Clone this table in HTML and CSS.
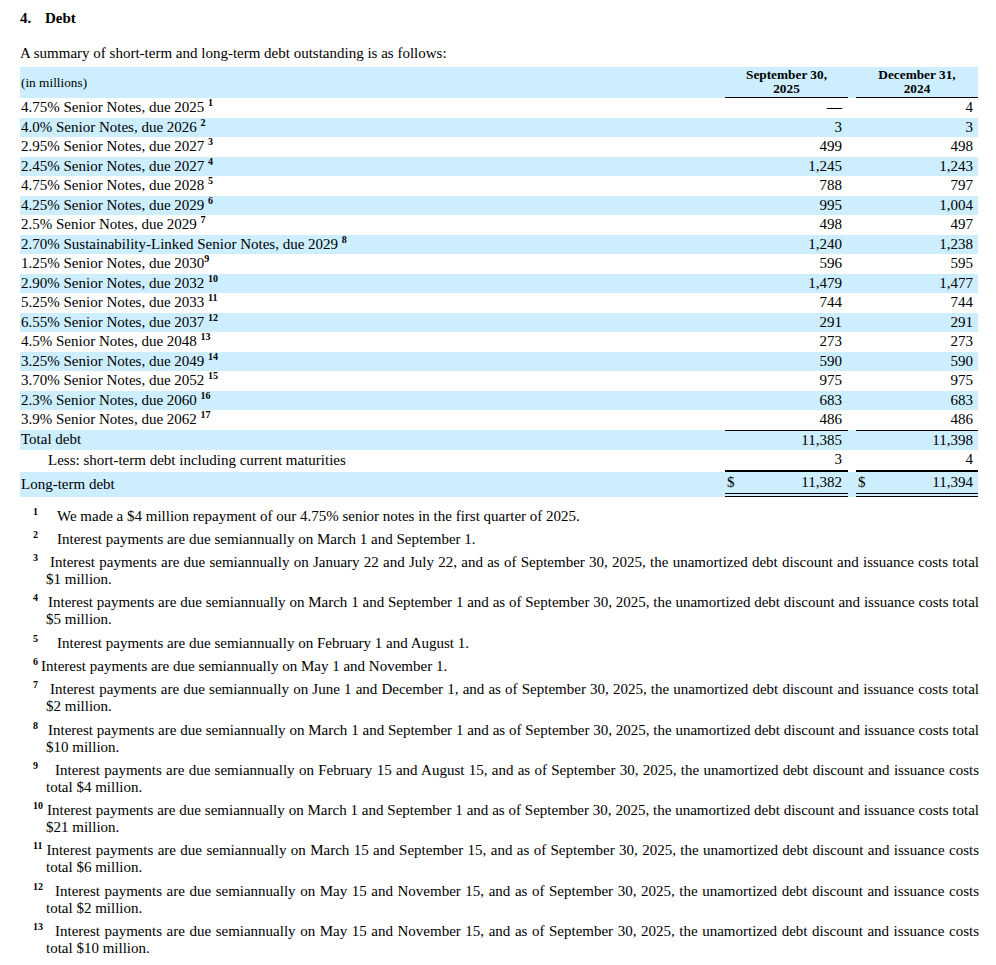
FILE: index.html
```html
<!DOCTYPE html>
<html lang="en">
<head>
<meta charset="utf-8">
<title>Debt</title>
<link rel="stylesheet" href="styles.css">
</head>
<body>
<div class="page">
  <h2 class="heading"><span class="heading-num">4.</span><span>Debt</span></h2>
  <p class="intro">A summary of short-term and long-term debt outstanding is as follows:</p>

  <table class="debt">
    <colgroup>
      <col class="c-label">
      <col class="c-num">
      <col class="c-gap">
      <col class="c-num2">
    </colgroup>
    <thead>
      <tr class="alt">
        <th class="units">(in millions)</th>
        <th class="col-head">September 30,<br>2025</th>
        <th class="gap"></th>
        <th class="col-head">December 31,<br>2024</th>
      </tr>
    </thead>
    <tbody>
      <tr><td class="label">4.75% Senior Notes, due 2025 <sup class="tsup">1</sup></td><td class="num"><span class="nil">—</span></td><td class="gap"></td><td class="num">4</td></tr>
      <tr class="alt"><td class="label">4.0% Senior Notes, due 2026 <sup class="tsup">2</sup></td><td class="num">3</td><td class="gap"></td><td class="num">3</td></tr>
      <tr><td class="label">2.95% Senior Notes, due 2027 <sup class="tsup">3</sup></td><td class="num">499</td><td class="gap"></td><td class="num">498</td></tr>
      <tr class="alt"><td class="label">2.45% Senior Notes, due 2027 <sup class="tsup">4</sup></td><td class="num">1,245</td><td class="gap"></td><td class="num">1,243</td></tr>
      <tr><td class="label">4.75% Senior Notes, due 2028 <sup class="tsup">5</sup></td><td class="num">788</td><td class="gap"></td><td class="num">797</td></tr>
      <tr class="alt"><td class="label">4.25% Senior Notes, due 2029 <sup class="tsup">6</sup></td><td class="num">995</td><td class="gap"></td><td class="num">1,004</td></tr>
      <tr><td class="label">2.5% Senior Notes, due 2029 <sup class="tsup">7</sup></td><td class="num">498</td><td class="gap"></td><td class="num">497</td></tr>
      <tr class="alt"><td class="label">2.70% Sustainability-Linked Senior Notes, due 2029 <sup class="tsup">8</sup></td><td class="num">1,240</td><td class="gap"></td><td class="num">1,238</td></tr>
      <tr><td class="label">1.25% Senior Notes, due 2030<sup class="tsup">9</sup></td><td class="num">596</td><td class="gap"></td><td class="num">595</td></tr>
      <tr class="alt"><td class="label">2.90% Senior Notes, due 2032 <sup class="tsup">10</sup></td><td class="num">1,479</td><td class="gap"></td><td class="num">1,477</td></tr>
      <tr><td class="label">5.25% Senior Notes, due 2033 <sup class="tsup">11</sup></td><td class="num">744</td><td class="gap"></td><td class="num">744</td></tr>
      <tr class="alt"><td class="label">6.55% Senior Notes, due 2037 <sup class="tsup">12</sup></td><td class="num">291</td><td class="gap"></td><td class="num">291</td></tr>
      <tr><td class="label">4.5% Senior Notes, due 2048 <sup class="tsup">13</sup></td><td class="num">273</td><td class="gap"></td><td class="num">273</td></tr>
      <tr class="alt"><td class="label">3.25% Senior Notes, due 2049 <sup class="tsup">14</sup></td><td class="num">590</td><td class="gap"></td><td class="num">590</td></tr>
      <tr><td class="label">3.70% Senior Notes, due 2052 <sup class="tsup">15</sup></td><td class="num">975</td><td class="gap"></td><td class="num">975</td></tr>
      <tr class="alt"><td class="label">2.3% Senior Notes, due 2060 <sup class="tsup">16</sup></td><td class="num">683</td><td class="gap"></td><td class="num">683</td></tr>
      <tr><td class="label">3.9% Senior Notes, due 2062 <sup class="tsup">17</sup></td><td class="num">486</td><td class="gap"></td><td class="num">486</td></tr>
      <tr class="alt total"><td class="label">Total debt</td><td class="num">11,385</td><td class="gap"></td><td class="num">11,398</td></tr>
      <tr class="less"><td class="label indent">Less: short-term debt including current maturities</td><td class="num">3</td><td class="gap"></td><td class="num">4</td></tr>
      <tr class="alt grand"><td class="label">Long-term debt</td><td class="num"><div class="money"><span>$</span><span>11,382</span></div></td><td class="gap"></td><td class="num"><div class="money"><span>$</span><span>11,394</span></div></td></tr>
    </tbody>
  </table>

  <div class="notes">
    <p class="fn"><sup class="fsup">1</sup><span class="sp sp-19"></span>We made a $4 million repayment of our 4.75% senior notes in the first quarter of 2025.</p>
    <p class="fn"><sup class="fsup">2</sup><span class="sp sp-19"></span>Interest payments are due semiannually on March 1 and September 1.</p>
    <p class="fn"><sup class="fsup">3</sup><span class="sp sp-12"></span>Interest payments are due semiannually on January 22 and July 22, and as of September 30, 2025, the unamortized debt discount and issuance costs total $1 million.</p>
    <p class="fn"><sup class="fsup">4</sup><span class="sp sp-10"></span>Interest payments are due semiannually on March 1 and September 1 and as of September 30, 2025, the unamortized debt discount and issuance costs total $5 million.</p>
    <p class="fn"><sup class="fsup">5</sup><span class="sp sp-19"></span>Interest payments are due semiannually on February 1 and August 1.</p>
    <p class="fn"><sup class="fsup">6</sup><span class="sp sp-3"></span>Interest payments are due semiannually on May 1 and November 1.</p>
    <p class="fn"><sup class="fsup">7</sup><span class="sp sp-12"></span>Interest payments are due semiannually on June 1 and December 1, and as of September 30, 2025, the unamortized debt discount and issuance costs total $2 million.</p>
    <p class="fn"><sup class="fsup">8</sup><span class="sp sp-10"></span>Interest payments are due semiannually on March 1 and September 1 and as of September 30, 2025, the unamortized debt discount and issuance costs total $10 million.</p>
    <p class="fn"><sup class="fsup">9</sup><span class="sp sp-17"></span>Interest payments are due semiannually on February 15 and August 15, and as of September 30, 2025, the unamortized debt discount and issuance costs total $4 million.</p>
    <p class="fn"><sup class="fsup">10</sup><span class="sp sp-4"></span>Interest payments are due semiannually on March 1 and September 1 and as of September 30, 2025, the unamortized debt discount and issuance costs total $21 million.</p>
    <p class="fn"><sup class="fsup">11</sup><span class="sp sp-4"></span>Interest payments are due semiannually on March 15 and September 15, and as of September 30, 2025, the unamortized debt discount and issuance costs total $6 million.</p>
    <p class="fn"><sup class="fsup">12</sup><span class="sp sp-12"></span>Interest payments are due semiannually on May 15 and November 15, and as of September 30, 2025, the unamortized debt discount and issuance costs total $2 million.</p>
    <p class="fn"><sup class="fsup">13</sup><span class="sp sp-12"></span>Interest payments are due semiannually on May 15 and November 15, and as of September 30, 2025, the unamortized debt discount and issuance costs total $10 million.</p>
  </div>
</div>
</body>
</html>
```

FILE: styles.css
```css
html, body {
  margin: 0;
  padding: 0;
  background: #ffffff;
}

.page {
  padding: 10px 17px 0 20px;
  font-family: "Liberation Serif", "Times New Roman", serif;
  font-size: 15px;
  color: #000000;
}

.heading {
  margin: 0;
  font-size: 15px;
  font-weight: bold;
  line-height: 17px;
  display: flex;
}

.heading-num {
  width: 25px;
}

.intro {
  margin: 18px 0 5px;
  line-height: 17px;
}

.debt {
  width: 958px;
  table-layout: fixed;
  border-collapse: separate;
  border-spacing: 0;
}

.c-label { width: 705px; }
.c-num { width: 123px; }
.c-gap { width: 8px; }
.c-num2 { width: 122px; }

.debt th,
.debt td {
  padding: 0;
  font-weight: normal;
}

.alt th,
.alt td {
  background: #cceeff;
}

.units {
  text-align: left;
  vertical-align: middle;
  font-size: 13.3px;
  padding-left: 1px !important;
}

.col-head {
  font-size: 13.3px;
  font-weight: bold !important;
  line-height: 14px;
  text-align: center;
  padding: 1px 0 1px !important;
  border-bottom: 1px solid #000000;
}

.debt td {
  line-height: 19.5px;
  white-space: nowrap;
}

.label {
  padding-left: 1px !important;
}

.label.indent {
  padding-left: 28px !important;
}

.num {
  text-align: right;
  padding-right: 6px !important;
}

.debt td.num:last-child {
  padding-right: 5px !important;
}

.nil {
  font-weight: bold;
}

.tsup,
.fsup {
  font-size: 10px;
  font-weight: bold;
  vertical-align: super;
  line-height: 0;
}

.total td.num {
  border-top: 1px solid #000000;
}

.less td.num {
  border-bottom: 2px solid #000000;
}

.grand td {
  line-height: 21px;
}

.grand td.num {
  border-bottom: 4px double #000000;
}

.money {
  display: flex;
  justify-content: space-between;
  padding-left: 2px;
}

.notes {
  margin-top: 11px;
}

.fn {
  margin: 0 0 6.3px;
  padding-left: 26px;
  text-indent: -13px;
  line-height: 17px;
  text-align: justify;
}

.sp {
  display: inline-block;
  text-indent: 0;
}

.sp-3 { width: 3px; }
.sp-4 { width: 4px; }
.sp-10 { width: 10px; }
.sp-12 { width: 12px; }
.sp-17 { width: 17px; }
.sp-19 { width: 19px; }
```
